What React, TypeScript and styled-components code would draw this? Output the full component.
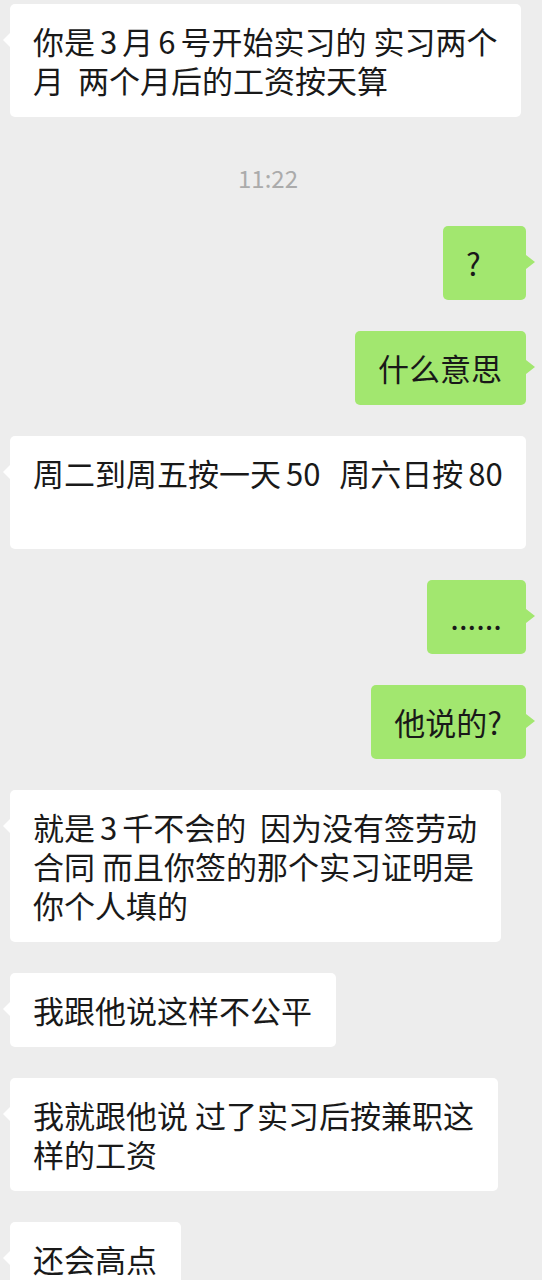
import React from 'react'
import styled, { createGlobalStyle, css } from 'styled-components'

const GlobalStyle = createGlobalStyle`
  html, body {
    margin: 0;
    padding: 0;
    background: #ededed;
  }
  body {
    font-family: "Noto Sans CJK SC", "Noto Sans", sans-serif;
    overflow: hidden;
  }
`

const Chat = styled.div`
  display: flex;
  flex-direction: column;
  gap: 31px;
  padding: 4px 16px 0 10px;
  height: 1280px;
  box-sizing: border-box;
  overflow: hidden;
`

const Time = styled.div`
  padding-top: 12px;
  line-height: 35px;
  font-size: 24px;
  color: #ababab;
  text-align: center;
`

const Row = styled.div<{ $mine?: boolean }>`
  display: flex;
  justify-content: ${(p) => (p.$mine ? 'flex-end' : 'flex-start')};
`

const Bubble = styled.div<{ $mine?: boolean }>`
  position: relative;
  box-sizing: border-box;
  min-width: 83px;
  padding: 17px 24px 18px 23px;
  border-radius: 5px;
  font-size: 31px;
  line-height: 39px;
  color: #191919;
  background: ${(p) => (p.$mine ? '#a2e76f' : '#ffffff')};

  &::before {
    content: '';
    position: absolute;
    top: 29px;
    width: 0;
    height: 0;
    border-top: 7px solid transparent;
    border-bottom: 7px solid transparent;
    ${(p) =>
      p.$mine
        ? css`
            right: -9px;
            border-left: 9px solid #a2e76f;
          `
        : css`
            left: -7px;
            border-right: 7px solid #ffffff;
          `}
  }
`

const Line = styled.div`
  min-height: 39px;
  white-space: pre;
`

const Num = styled.span`
  margin: 0 5px;
`

type Msg = { mine?: boolean; lines: string[] } | { time: string }

const messages: Msg[] = [
  { lines: ['你是3月6号开始实习的 实习两个', '月  两个月后的工资按天算'] },
  { time: '11:22' },
  { mine: true, lines: ['?'] },
  { mine: true, lines: ['什么意思'] },
  { lines: ['周二到周五按一天50  周六日按80', ''] },
  { mine: true, lines: ['......'] },
  { mine: true, lines: ['他说的?'] },
  { lines: ['就是3千不会的  因为没有签劳动', '合同 而且你签的那个实习证明是', '你个人填的'] },
  { lines: ['我跟他说这样不公平'] },
  { lines: ['我就跟他说 过了实习后按兼职这', '样的工资'] },
  { lines: ['还会高点'] },
]

function spaced(text: string) {
  return text.split(/(\d+)/).map((part, i) =>
    /^\d+$/.test(part) ? <Num key={i}>{part}</Num> : part
  )
}

export default function App() {
  return (
    <>
      <GlobalStyle />
      <Chat>
        {messages.map((m, i) =>
          'time' in m ? (
            <Time key={i}>{m.time}</Time>
          ) : (
            <Row key={i} $mine={m.mine}>
              <Bubble $mine={m.mine}>
                {m.lines.map((l, j) => (
                  <Line key={j}>{spaced(l)}</Line>
                ))}
              </Bubble>
            </Row>
          )
        )}
      </Chat>
    </>
  )
}
